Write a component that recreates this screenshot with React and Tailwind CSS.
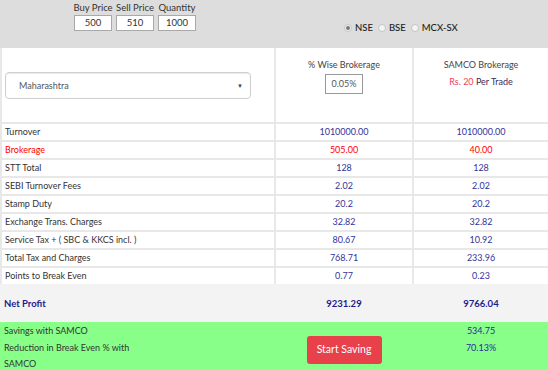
import React from "react";

const rows = [
  ["Turnover", "1010000.00", "1010000.00"],
  ["Brokerage", "505.00", "40.00", true],
  ["STT Total", "128", "128"],
  ["SEBI Turnover Fees", "2.02", "2.02"],
  ["Stamp Duty", "20.2", "20.2"],
  ["Exchange Trans. Charges", "32.82", "32.82"],
  ["Service Tax + ( SBC & KKCS incl. )", "80.67", "10.92"],
  ["Total Tax and Charges", "768.71", "233.96"],
  ["Points to Break Even", "0.77", "0.23"],
];

function Radio({ checked, label }) {
  return (
    <div className="flex items-center gap-[3px]">
      <span className="w-[8px] h-[8px] rounded-full border border-[#c4c4c4] bg-[#f4f4f4] flex items-center justify-center">
        {checked && <span className="w-[4px] h-[4px] rounded-full bg-[#777]" />}
      </span>
      <span className="text-[9.5px] font-medium text-[#222]">{label}</span>
    </div>
  );
}

export default function App() {
  return (
    <div className="w-[548px] h-[370px] overflow-hidden bg-white text-[#333]" style={{ fontFamily: "Lato, 'Open Sans', sans-serif" }}>
      {/* top bar */}
      <div className="h-[48px] bg-[#dddddd] flex items-start">
        <div className="ml-[74px] mt-[2px] flex gap-[4px]">
          {[
            ["Buy Price", "500"],
            ["Sell Price", "510"],
            ["Quantity", "1000"],
          ].map(([l, v]) => (
            <div key={l} className="flex flex-col items-center w-[38px]">
              <span className="text-[9.5px] leading-[12px] whitespace-nowrap text-[#333]">{l}</span>
              <div className="mt-[1px] w-[38px] h-[16px] bg-white border border-[#a9a9a9] text-[9.5px] leading-[14px] text-center text-[#333]">{v}</div>
            </div>
          ))}
        </div>
        <div className="ml-[148px] mt-[21px] flex items-center gap-[5px]">
          <Radio checked label="NSE" />
          <Radio label="BSE" />
          <Radio label="MCX-SX" />
        </div>
      </div>

      {/* table */}
      <div className="grid grid-cols-[272px_136px_134px] gap-[2px] pl-[2px] bg-[#e8e8e8]">
        <div className="bg-white h-[74px] flex items-center">
          <div className="ml-[3px] mt-[1px] w-[246px] h-[27px] rounded-[4px] border border-[#cfcfcf] shadow-[inset_0_1px_1px_rgba(0,0,0,0.08)] flex items-center justify-between pl-[13px] pr-[7px]">
            <span className="text-[9px] text-[#555]">Maharashtra</span>
            <span className="text-[6px] text-[#444]">▼</span>
          </div>
        </div>
        <div className="bg-white h-[74px] flex flex-col items-center pt-[10px]">
          <span className="text-[9px] leading-[14px] text-[#444]">% Wise Brokerage</span>
          <div className="mt-[2px] w-[38px] h-[20px] border border-[#999] text-[9px] leading-[18px] text-center text-[#555]">0.05%</div>
        </div>
        <div className="bg-white h-[74px] flex flex-col items-center pt-[10px]">
          <span className="text-[9px] leading-[14px] text-[#444]">SAMCO Brokerage</span>
          <span className="text-[9px] leading-[19px]">
            <span className="text-[#ee4257]">Rs. 20</span> <span className="text-[#3b2a55]">Per Trade</span>
          </span>
        </div>
        {rows.map(([l, a, b, red]) => (
          <React.Fragment key={l}>
            <div className={`bg-white h-[16px] leading-[16px] text-[9px] pl-[3px] whitespace-nowrap ${red ? "text-[#ff0000]" : "text-[#333]"}`}>{l}</div>
            <div className={`bg-white h-[16px] leading-[16px] text-[9px] text-center ${red ? "text-[#ff0000]" : "text-[#33339a]"}`}>{a}</div>
            <div className={`bg-white h-[16px] leading-[16px] text-[9px] text-center ${red ? "text-[#ff0000]" : "text-[#33339a]"}`}>{b}</div>
          </React.Fragment>
        ))}
      </div>

      {/* net profit */}
      <div className="h-[38px] bg-[#f3f3f3] grid grid-cols-[274px_138px_136px] items-center pt-[2px] text-[9.5px] font-bold text-[#1c1c8f]">
        <div className="pl-[4px]">Net Profit</div>
        <div className="text-center pl-[2px]">9231.29</div>
        <div className="text-center pl-[2px]">9766.04</div>
      </div>

      {/* savings */}
      <div className="h-[48px] bg-[#88ff88] grid grid-cols-[274px_138px_136px] text-[9px]">
        <div className="pl-[4px] pt-[1px] leading-[16.5px] text-[#333] w-[140px]">
          <div>Savings with SAMCO</div>
          <div>Reduction in Break Even % with SAMCO</div>
        </div>
        <div className="flex items-center justify-center pl-[2px] pt-[5px]">
          <button className="w-[75px] h-[28px] rounded-[3px] bg-[#e8414b] text-white text-[10.5px]">Start Saving</button>
        </div>
        <div className="pl-[2px] pt-[1px] leading-[16.5px] text-center text-[#2a2aa0]">
          <div>534.75</div>
          <div>70.13%</div>
        </div>
      </div>
    </div>
  );
}
